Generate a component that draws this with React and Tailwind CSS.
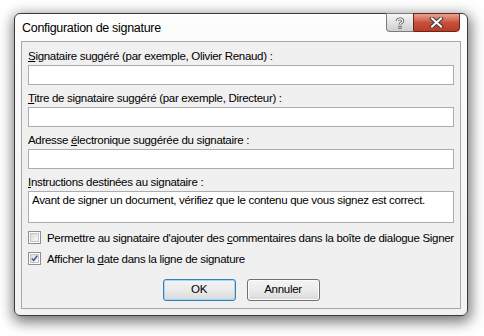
import React from 'react';

const FONT = { fontFamily: '"Liberation Sans", Arial, sans-serif' };

const Field = ({ label, className = '', children }) => (
  <div className={className}>
    <div className="h-[14px] leading-[14px] text-[11.5px] tracking-[-0.3px] text-black">{label}</div>
    {children || <div className="mt-[2px] h-[20px] bg-white border border-[#abadb3]" />}
  </div>
);

const Checkbox = ({ checked, children, className = '' }) => (
  <div className={`flex items-center h-[13px] ${className}`}>
    <div className="w-[13px] h-[13px] border border-[#8e8f8f] bg-white p-[1px] shrink-0">
      <div className="w-full h-full border border-[#c4c4c4] bg-gradient-to-br from-[#dcdcdc] to-[#f8f8f8] flex items-center justify-center">
        {checked && (
          <svg width="9" height="9" viewBox="0 0 9 9">
            <path d="M1 4.5 L3.5 7 L8 1" fill="none" stroke="#3b4f8c" strokeWidth="1.8" />
          </svg>
        )}
      </div>
    </div>
    <span className="ml-[6px] text-[11.5px] tracking-[-0.3px] leading-[14px] text-black whitespace-nowrap">{children}</span>
  </div>
);

const Button = ({ children, primary }) => (
  <button
    className={`w-[73px] h-[22px] rounded-[3px] border text-[11.5px] tracking-[-0.3px] text-black bg-gradient-to-b from-[#f4f4f4] via-[#ebebeb] to-[#d9d9d9] ${
      primary ? 'border-[#3c7fb1] shadow-[inset_0_0_0_1px_#9fd8f5]' : 'border-[#707070] shadow-[inset_0_0_0_1px_#fcfcfc]'
    }`}
  >
    {children}
  </button>
);

export default function App() {
  return (
    <div className="w-[484px] h-[336px] bg-white overflow-hidden" style={FONT}>
      <div className="ml-[14px] mt-[13px] w-[454px] h-[303px] rounded-[6px] border border-[#3a3a3a] bg-gradient-to-b from-[#fdfdfd] to-[#f2f2f2] shadow-[1px_4px_14px_2px_rgba(0,0,0,0.55)] flex flex-col">
        {/* Title bar */}
        <div className="h-[27px] flex justify-between pl-[7px] pr-[7px]">
          <div className="pt-[6px] text-[12.5px] tracking-[-0.3px] leading-[16px] text-black">Configuration de signature</div>
          <div className="flex items-start -mt-[1px]">
            <div className="w-[27px] h-[19px] rounded-bl-[4px] border border-[#7b7b7b] border-r-0 bg-gradient-to-b from-[#f5f5f5] via-[#e3e3e3] to-[#cfcfcf] flex items-center justify-center">
              <svg width="10" height="12" viewBox="0 0 10 12">
                <path d="M2.2 4 C2.2 1.2 7.8 1.2 7.8 4 C7.8 5.8 5 5.8 5 7.6" fill="none" stroke="#555" strokeWidth="2.8" />
                <path d="M2.2 4 C2.2 1.2 7.8 1.2 7.8 4 C7.8 5.8 5 5.8 5 7.6" fill="none" stroke="#fff" strokeWidth="1.2" />
                <rect x="3.5" y="8.8" width="3" height="3" fill="#555" />
                <rect x="4.3" y="9.6" width="1.4" height="1.4" fill="#fff" />
              </svg>
            </div>
            <div className="w-[47px] h-[19px] rounded-br-[4px] border border-[#6b2418] bg-gradient-to-b from-[#e8a493] via-[#c9513c] to-[#b63a25] flex items-center justify-center">
              <svg width="15" height="11" viewBox="0 0 15 11">
                <path d="M3 1.5 L12 9.5 M12 1.5 L3 9.5" stroke="#3d3d3d" strokeWidth="4" strokeLinecap="square" />
                <path d="M3 1.5 L12 9.5 M12 1.5 L3 9.5" stroke="#fff" strokeWidth="2" strokeLinecap="square" />
              </svg>
            </div>
          </div>
        </div>

        {/* Content panel */}
        <div className="mx-[6px] h-[268px] border border-[#a8a8a8] bg-[#f0f0f0] px-[6px] pt-[7px] flex flex-col">
          <Field label={<><span className="underline">S</span>ignataire suggéré (par exemple, Olivier Renaud) :</>} />
          <Field className="mt-[6px]" label={<><span className="underline">T</span>itre de signataire suggéré (par exemple, Directeur) :</>} />
          <Field className="mt-[6px]" label={<>Adresse <span className="underline">é</span>lectronique suggérée du signataire :</>} />
          <Field className="mt-[6px]" label={<><span className="underline">I</span>nstructions destinées au signataire :</>}>
            <div className="mt-[2px] h-[32px] bg-white border border-[#abadb3] px-[3px] pt-[1px] text-[11.5px] tracking-[-0.3px] leading-[14px] text-black">
              Avant de signer un document, vérifiez que le contenu que vous signez est correct.
            </div>
          </Field>

          <Checkbox className="mt-[8px]">
            Permettre au signataire d'ajouter des <span className="underline">c</span>ommentaires dans la boîte de dialogue Signer
          </Checkbox>
          <Checkbox className="mt-[8px]" checked>
            Afficher la <span className="underline">d</span>ate dans la ligne de signature
          </Checkbox>

          <div className="mt-[14px] flex justify-center gap-[11px]">
            <Button primary>OK</Button>
            <Button>Annuler</Button>
          </div>
        </div>
      </div>
    </div>
  );
}
